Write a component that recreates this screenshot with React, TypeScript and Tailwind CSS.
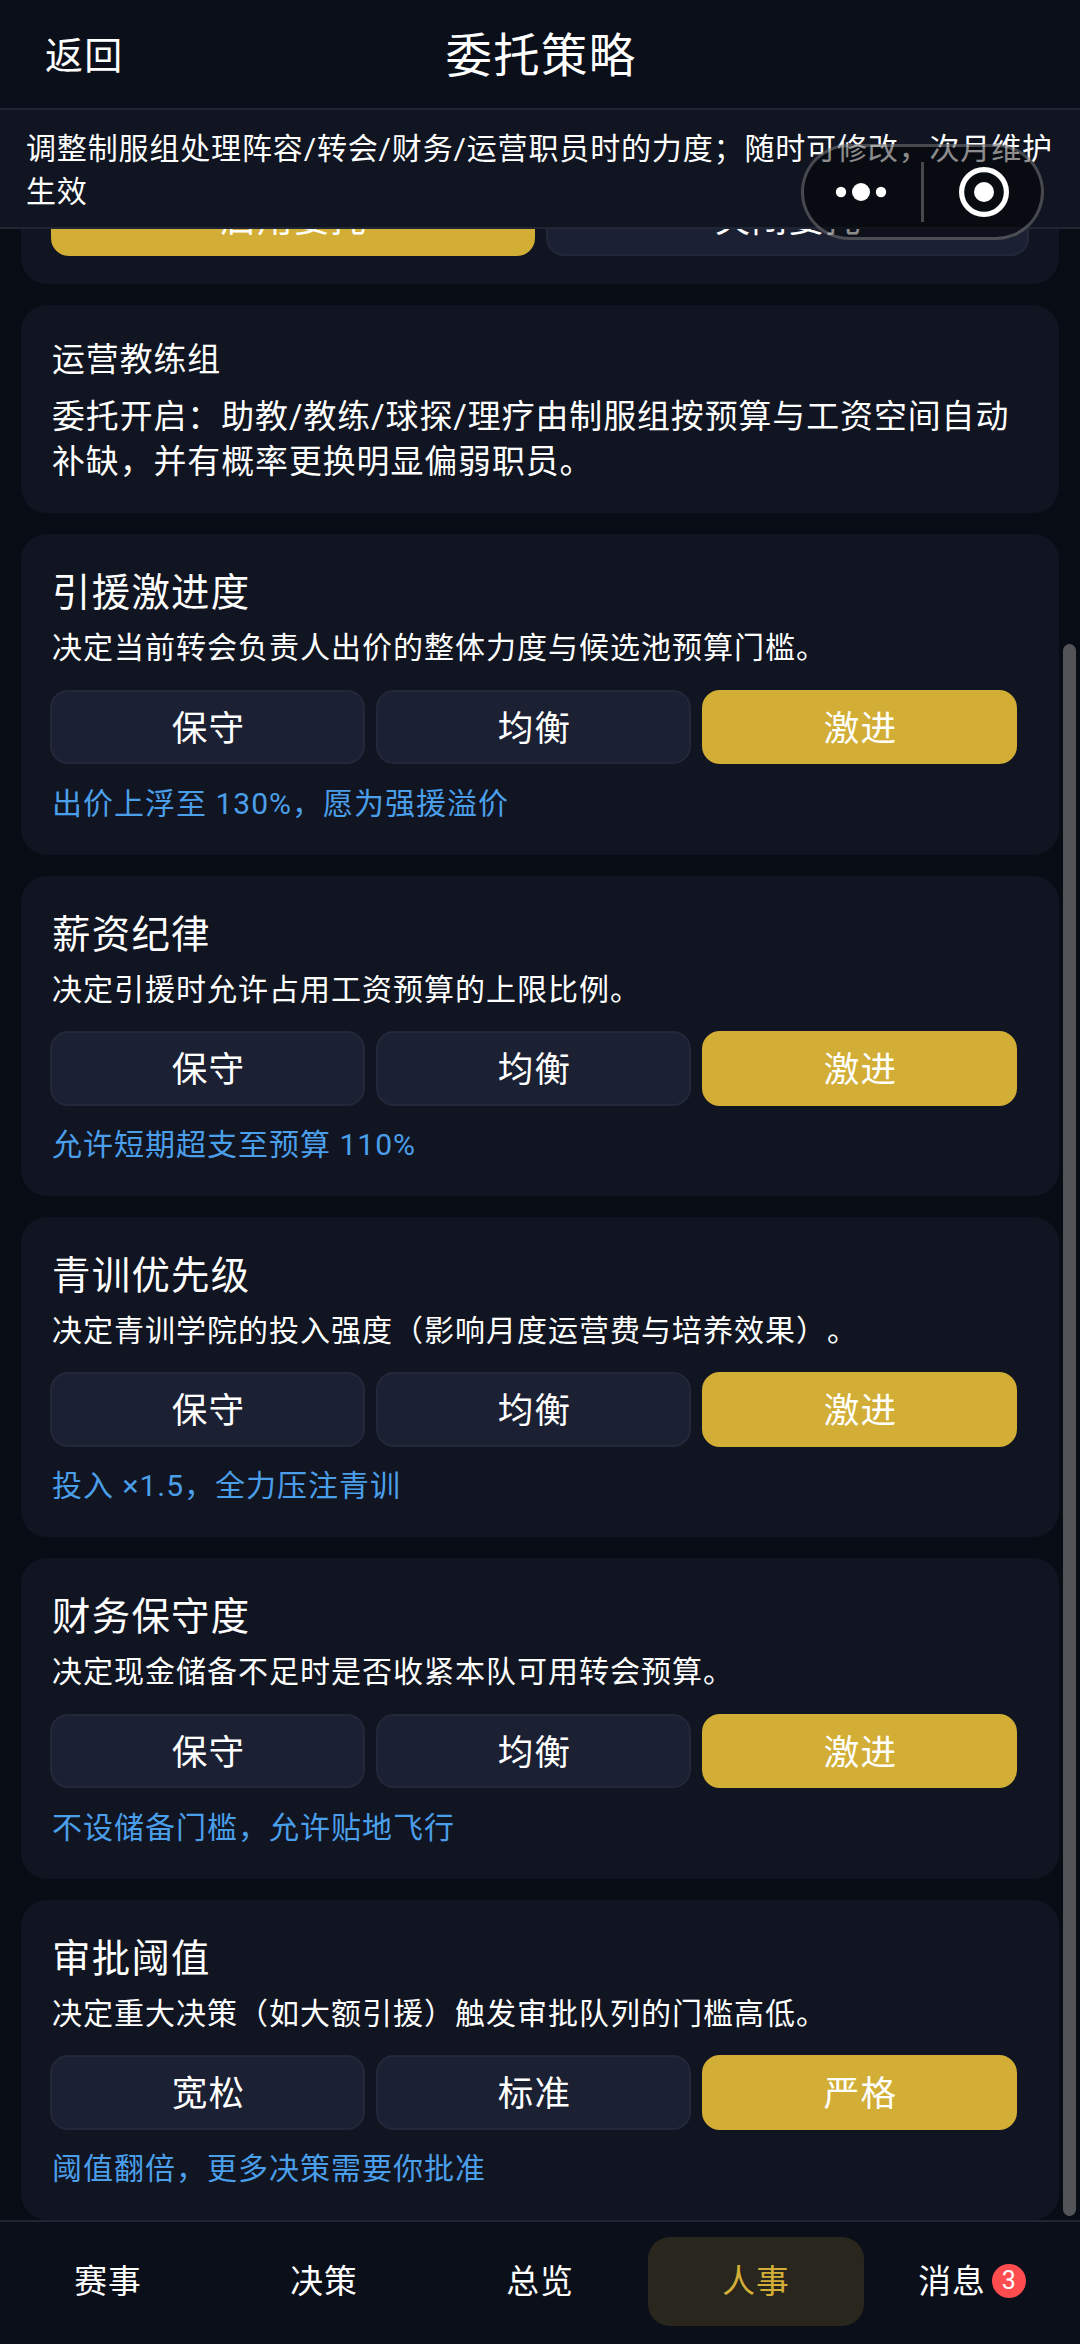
import { useState } from 'react';
import clsx from 'clsx';

interface Strategy {
  key: string;
  title: string;
  desc: string;
  options: string[];
  hint: string;
}

const strategies: Strategy[] = [
  {
    key: 'transfer',
    title: '引援激进度',
    desc: '决定当前转会负责人出价的整体力度与候选池预算门槛。',
    options: ['保守', '均衡', '激进'],
    hint: '出价上浮至 130%，愿为强援溢价',
  },
  {
    key: 'salary',
    title: '薪资纪律',
    desc: '决定引援时允许占用工资预算的上限比例。',
    options: ['保守', '均衡', '激进'],
    hint: '允许短期超支至预算 110%',
  },
  {
    key: 'youth',
    title: '青训优先级',
    desc: '决定青训学院的投入强度（影响月度运营费与培养效果）。',
    options: ['保守', '均衡', '激进'],
    hint: '投入 ×1.5，全力压注青训',
  },
  {
    key: 'finance',
    title: '财务保守度',
    desc: '决定现金储备不足时是否收紧本队可用转会预算。',
    options: ['保守', '均衡', '激进'],
    hint: '不设储备门槛，允许贴地飞行',
  },
  {
    key: 'approval',
    title: '审批阈值',
    desc: '决定重大决策（如大额引援）触发审批队列的门槛高低。',
    options: ['宽松', '标准', '严格'],
    hint: '阈值翻倍，更多决策需要你批准',
  },
];

const tabs = [
  { label: '赛事' },
  { label: '决策' },
  { label: '总览' },
  { label: '人事' },
  { label: '消息', badge: 3 },
];

interface OptionButtonProps {
  label: string;
  active: boolean;
  onClick: () => void;
}

function OptionButton({ label, active, onClick }: OptionButtonProps) {
  return (
    <button
      onClick={onClick}
      className={clsx(
        'h-[74.7px] flex-1 rounded-[18px] border-2 pt-[5px] pl-[2px] text-[35.6px] leading-none tracking-[1.2px] text-white',
        active ? 'border-[#d2ae36] bg-[#d2ae36]' : 'border-[#22283a] bg-[#1b2032]',
      )}
    >
      {label}
    </button>
  );
}

function StrategyCard({ strategy }: { strategy: Strategy }) {
  const [selected, setSelected] = useState(2);

  return (
    <section className="shrink-0 rounded-[26px] bg-[#101521] px-[30px] pt-[31px] pb-[30px]">
      <h2 className="pl-px text-[38.4px] leading-[55px] tracking-[1.3px]">{strategy.title}</h2>
      <p className="mt-[6px] pl-px text-[30px] leading-[44px] tracking-[1px]">{strategy.desc}</p>
      <div className="mt-[19.5px] mr-[12px] -ml-px flex gap-[11px]">
        {strategy.options.map((label, i) => (
          <OptionButton key={label} label={label} active={selected === i} onClick={() => setSelected(i)} />
        ))}
      </div>
      <p className="mt-[17.2px] -mb-px pl-px text-[30px] leading-[44px] tracking-[1px] text-[#4b9fea]">{strategy.hint}</p>
    </section>
  );
}

function Capsule() {
  return (
    <div className="absolute top-[144px] left-[801px] z-10 h-[96px] w-[243px] rounded-full border-[3px] border-white/25 bg-black/45">
      <svg viewBox="0 0 237 90" className="h-full w-full">
        <circle cx="37" cy="45" r="5.2" fill="#fff" />
        <circle cx="57" cy="45" r="9" fill="#fff" />
        <circle cx="77" cy="45" r="5.2" fill="#fff" />
        <rect x="117" y="15" width="3" height="60" fill="#fff" fillOpacity="0.25" />
        <circle cx="180" cy="45" r="22.4" fill="none" stroke="#fff" strokeWidth="5.2" />
        <circle cx="180" cy="45" r="10" fill="#fff" />
      </svg>
    </div>
  );
}

export default function App() {
  const [enabled, setEnabled] = useState(true);
  const [tab, setTab] = useState('人事');

  return (
    <div className="relative flex h-[2344px] w-[1080px] flex-col overflow-hidden bg-[#080c15] font-[Roboto,'Noto_Sans_CJK_SC',sans-serif] text-white [text-spacing-trim:space-all]">
      <header className="grid h-[110px] shrink-0 grid-cols-3 items-center border-b-2 border-[#212635] bg-[#0b0f1a] pt-[4px]">
        <button className="pl-[45px] text-left text-[38px] leading-none tracking-[1.2px]">返回</button>
        <h1 className="pl-[2px] text-center text-[46.4px] leading-none tracking-[1.4px]">委托策略</h1>
      </header>

      <div className="h-[119px] shrink-0 border-b-2 border-[#212635] bg-[#101521] pt-[18px] pl-[26px] text-[30px] leading-[42.5px] tracking-[0.85px]">
        调整制服组处理阵容/转会/财务/运营职员时的力度；随时可修改，次月维护生效
      </div>

      <main className="flex min-h-0 flex-1 flex-col justify-end gap-[21px] overflow-hidden pr-[21px] pl-[21px]">
        <section className="shrink-0 rounded-[26px] bg-[#101521] px-[30px] pt-[30px] pb-[28.5px]">
          <div className="flex gap-[11px]">
            <OptionButton label="启用委托" active={enabled} onClick={() => setEnabled(true)} />
            <OptionButton label="关闭委托" active={!enabled} onClick={() => setEnabled(false)} />
          </div>
        </section>

        <section className="shrink-0 rounded-[26px] bg-[#101521] px-[31px] pt-[30.5px] pb-[29.5px] tracking-[0.95px]">
          <h2 className="text-[32.9px] leading-[47px]">运营教练组</h2>
          <p className="mt-[11px] text-[32.9px] leading-[45px]">
            委托开启：助教/教练/球探/理疗由制服组按预算与工资空间自动补缺，并有概率更换明显偏弱职员。
          </p>
        </section>

        {strategies.map((s) => (
          <StrategyCard key={s.key} strategy={s} />
        ))}
      </main>

      <nav className="flex h-[124px] shrink-0 border-t-2 border-[#212635] bg-[#0b0f1a] pt-[15px] pb-[18px]">
        {tabs.map((t) => (
          <button
            key={t.label}
            onClick={() => setTab(t.label)}
            className={clsx(
              'flex flex-1 items-center justify-center gap-[6px] rounded-[22px] pb-[2px] text-[32.8px] leading-none tracking-[1px]',
              tab === t.label && 'bg-[#d4af37]/15 text-[#d4af37]',
            )}
          >
            <span className="pt-[4px]">{t.label}</span>
            {t.badge && (
              <span className="flex h-[34px] w-[34px] items-center justify-center rounded-full bg-[#ff4d4f] text-[25px] tracking-normal text-white">
                {t.badge}
              </span>
            )}
          </button>
        ))}
      </nav>

      {/* scroll indicator */}
      <div className="absolute top-[644px] right-[4px] h-[1572px] w-[13px] rounded-full bg-[#535457]" />
      <Capsule />
    </div>
  );
}
